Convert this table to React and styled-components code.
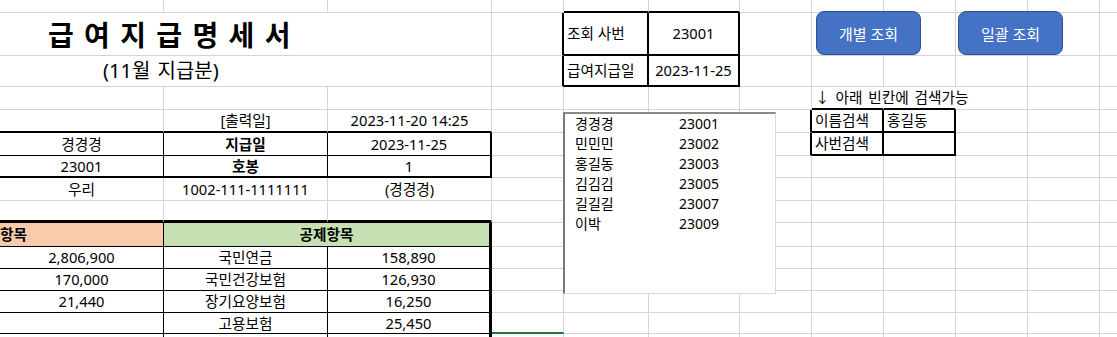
import React from "react";
import styled, { createGlobalStyle } from "styled-components";

const GRID = "#d4d4d4";
const T = "1px solid #000";
const M = "2px solid #000";
const K = "3px solid #000";
const CLEAR = "1px solid transparent";

const COLS = [164, 164, 164, 72, 85, 91, 72, 72, 72, 72, 72, 72];
const ROWS = [13, 43, 31, 23, 23, 23, 22, 23, 22, 24, 22, 22, 22, 21, 22];
const LETTERS = "ABCDEFGHIJKL";

const GlobalStyle = createGlobalStyle`
  html, body { margin: 0; padding: 0; background: #fff; overflow: hidden; }
  body { font-family: "Noto Sans", "Noto Sans CJK KR", sans-serif; color: #000; }
`;

const Page = styled.div`
  position: relative;
  width: 1117px;
  height: 337px;
  overflow: hidden;
  background: #fff;
`;

const Sheet = styled.div`
  display: grid;
  grid-template-columns: ${COLS.map((c) => c + "px").join(" ")};
  grid-template-rows: ${ROWS.map((r) => r + "px").join(" ")};
  width: max-content;
`;

const Cell = styled.div`
  box-sizing: border-box;
  grid-column: ${(p) => p.$col} / span ${(p) => p.$span || 1};
  grid-row: ${(p) => p.$row};
  border-right: ${(p) => p.$r || `1px solid ${GRID}`};
  border-bottom: ${(p) => p.$b || `1px solid ${GRID}`};
  background: ${(p) => p.$bg || "transparent"};
  display: flex;
  align-items: center;
  justify-content: ${(p) => (p.$align === "left" ? "flex-start" : "center")};
  padding: 0 ${(p) => (p.$align === "left" ? "3px" : "0")};
  padding-left: ${(p) => (p.$indent != null ? p.$indent + "px" : undefined)};
  font-size: 14.67px;
  font-weight: ${(p) => (p.$bold ? 700 : 400)};
  word-spacing: ${(p) => (p.$wide ? "2px" : "0")};
  white-space: nowrap;
  overflow: ${(p) => (p.$spill ? "visible" : "hidden")};
  min-width: 0;
  line-height: 1;
`;

const TitleCell = styled(Cell)`
  font-size: 28px;
  font-weight: 700;
  font-family: "Noto Sans CJK KR", sans-serif;
  word-spacing: 4px;
`;

const SubTitleCell = styled(Cell)`
  font-size: 20px;
  word-spacing: 2px;
`;

const ListBox = styled.div`
  position: absolute;
  left: 563px;
  top: 112px;
  width: 213px;
  height: 182px;
  box-sizing: border-box;
  background: #fff;
  border-left: 2px solid #7a7a7a;
  border-top: 2px solid #8a8a8a;
  border-right: 1px solid #d9d9d9;
  border-bottom: 1px solid #d9d9d9;
  display: grid;
  grid-template-columns: 104px 1fr;
  grid-auto-rows: 20px;
  align-content: start;
  padding-left: 10px;
`;

const ListItem = styled.div`
  font-size: 14px;
  display: flex;
  align-items: center;
  line-height: 1;
  white-space: nowrap;
`;

const ButtonBar = styled.div`
  position: absolute;
  left: 816px;
  top: 11px;
  display: flex;
  gap: 37px;
`;

const ShapeButton = styled.button`
  width: 105px;
  height: 44px;
  box-sizing: border-box;
  background: #4472c4;
  border: 1px solid #2f528f;
  border-radius: 8px;
  color: #fff;
  font-family: "Noto Sans", "Noto Sans CJK KR", sans-serif;
  font-size: 15px;
  padding: 0;
  display: flex;
  align-items: center;
  justify-content: center;
  cursor: pointer;
`;

const spec = {
  E1: { b: M },
  F1: { b: M },
  A2: { kind: "title", span: 3, text: "급 여 지 급 명 세 서", align: "left", indent: 48 },
  D2: { r: M },
  E2: { text: "조회 사번", align: "left", r: M, b: M },
  F2: { text: "23001", r: M, b: M },
  A3: { kind: "sub", span: 3, text: "(11월 지급분)", align: "left", indent: 103 },
  D3: { r: M },
  E3: { text: "급여지급일", align: "left", r: M, b: M },
  F3: { text: "2023-11-25", r: M, b: M },
  H4: { text: "↓ 아래 빈칸에 검색가능", align: "left", r: CLEAR, b: M, spill: true, wide: true },
  I4: { r: CLEAR, b: M },
  A5: { b: M },
  B5: { text: "[출력일]", b: M },
  C5: { text: "2023-11-20 14:25", b: M },
  G5: { r: M },
  H5: { text: "이름검색", align: "left", r: M, b: M },
  I5: { text: "홍길동", align: "left", r: M, b: M },
  A6: { text: "경경경", r: T, b: T },
  B6: { text: "지급일", bold: true, r: T, b: T },
  C6: { text: "2023-11-25", r: M, b: T },
  G6: { r: M },
  H6: { text: "사번검색", align: "left", r: M, b: M },
  I6: { r: M, b: M },
  A7: { text: "23001", r: T, b: M },
  B7: { text: "호봉", bold: true, r: T, b: M },
  C7: { text: "1", r: M, b: M },
  A8: { text: "우리" },
  B8: { text: "1002-111-1111111" },
  C8: { text: "(경경경)" },
  A9: { b: K },
  B9: { b: K },
  C9: { b: K },
  A10: { text: "항목", bold: true, align: "left", indent: 0, bg: "#f8cbad", r: T, b: T },
  B10: { text: "공제항목", bold: true, span: 2, bg: "#c6e0b4", r: K, b: T },
  D14: { b: "2px solid #217346" },
  A15: { r: T },
  B15: { r: T },
  C15: { r: K },
};

const payRows = [
  ["2,806,900", "국민연금", "158,890"],
  ["170,000", "국민건강보험", "126,930"],
  ["21,440", "장기요양보험", "16,250"],
  ["", "고용보험", "25,450"],
];
payRows.forEach(([a, b, c], i) => {
  const r = 11 + i;
  spec["A" + r] = { text: a, r: T, b: T };
  spec["B" + r] = { text: b, r: T, b: T };
  spec["C" + r] = { text: c, r: K, b: T };
});

const employees = [
  ["경경경", "23001"],
  ["민민민", "23002"],
  ["홍길동", "23003"],
  ["김김김", "23005"],
  ["길길길", "23007"],
  ["이박", "23009"],
];

function buildCells() {
  const out = [];
  const covered = new Set();
  for (let r = 1; r <= ROWS.length; r++) {
    for (let c = 0; c < COLS.length; c++) {
      const key = LETTERS[c] + r;
      if (covered.has(key)) continue;
      const s = spec[key] || {};
      const span = s.span || 1;
      for (let k = 1; k < span; k++) covered.add(LETTERS[c + k] + r);
      const Comp = s.kind === "title" ? TitleCell : s.kind === "sub" ? SubTitleCell : Cell;
      out.push(
        <Comp
          key={key}
          $row={r}
          $col={c + 1}
          $span={span}
          $r={s.r}
          $b={s.b}
          $bg={s.bg}
          $bold={s.bold}
          $align={s.align}
          $indent={s.indent}
          $spill={s.spill}
          $wide={s.wide}
        >
          {s.text}
        </Comp>
      );
    }
  }
  return out;
}

export default function App() {
  return (
    <>
      <GlobalStyle />
      <Page>
        <Sheet>{buildCells()}</Sheet>
        <ListBox>
          {employees.map(([name, id]) => (
            <React.Fragment key={id}>
              <ListItem>{name}</ListItem>
              <ListItem>{id}</ListItem>
            </React.Fragment>
          ))}
        </ListBox>
        <ButtonBar>
          <ShapeButton>개별 조회</ShapeButton>
          <ShapeButton>일괄 조회</ShapeButton>
        </ButtonBar>
      </Page>
    </>
  );
}
